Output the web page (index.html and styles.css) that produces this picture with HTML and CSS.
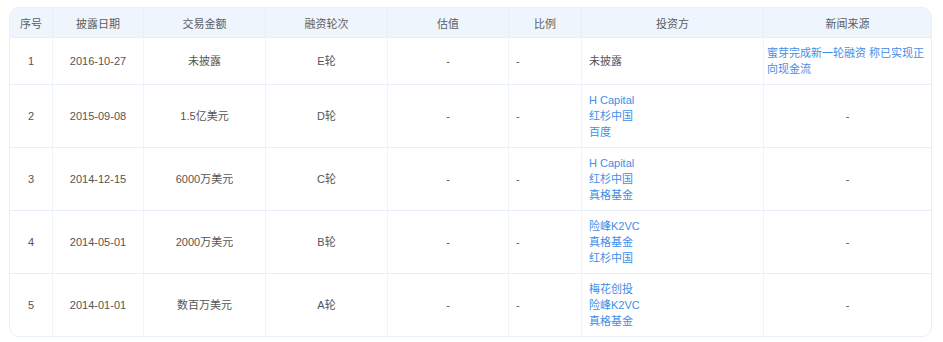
FILE: index.html
```html
<!DOCTYPE html>
<html lang="zh-CN">
<head>
<meta charset="utf-8">
<title>融资历程</title>
<link rel="stylesheet" href="styles.css">
</head>
<body>
<div class="wrap">
  <table class="fin">
    <colgroup>
      <col class="c1"><col class="c2"><col class="c3"><col class="c4"><col class="c5"><col class="c6"><col class="c7"><col class="c8">
    </colgroup>
    <thead>
      <tr>
        <th>序号</th><th>披露日期</th><th>交易金额</th><th>融资轮次</th><th>估值</th><th>比例</th><th>投资方</th><th>新闻来源</th>
      </tr>
    </thead>
    <tbody>
      <tr class="r1">
        <td>1</td><td>2016-10-27</td><td>未披露</td><td>E轮</td><td>-</td><td class="left">-</td>
        <td class="left">未披露</td>
        <td class="news"><a href="#">蜜芽完成新一轮融资 称已实现正向现金流</a></td>
      </tr>
      <tr>
        <td>2</td><td>2015-09-08</td><td>1.5亿美元</td><td>D轮</td><td>-</td><td class="left">-</td>
        <td class="left"><a href="#">H Capital</a><br><a href="#">红杉中国</a><br><a href="#">百度</a></td>
        <td>-</td>
      </tr>
      <tr>
        <td>3</td><td>2014-12-15</td><td>6000万美元</td><td>C轮</td><td>-</td><td class="left">-</td>
        <td class="left"><a href="#">H Capital</a><br><a href="#">红杉中国</a><br><a href="#">真格基金</a></td>
        <td>-</td>
      </tr>
      <tr>
        <td>4</td><td>2014-05-01</td><td>2000万美元</td><td>B轮</td><td>-</td><td class="left">-</td>
        <td class="left"><a href="#">险峰K2VC</a><br><a href="#">真格基金</a><br><a href="#">红杉中国</a></td>
        <td>-</td>
      </tr>
      <tr>
        <td>5</td><td>2014-01-01</td><td>数百万美元</td><td>A轮</td><td>-</td><td class="left">-</td>
        <td class="left"><a href="#">梅花创投</a><br><a href="#">险峰K2VC</a><br><a href="#">真格基金</a></td>
        <td>-</td>
      </tr>
    </tbody>
  </table>
</div>
</body>
</html>
```
FILE: styles.css
```css
html, body {
  margin: 0;
  padding: 0;
  background: #ffffff;
}
body {
  padding: 7px 0 0 9px;
  font-family: "Liberation Sans", "Noto Sans CJK SC", sans-serif;
  font-size: 11px;
  color: #555555;
}
.wrap {
  width: 923px;
  box-sizing: border-box;
  border: 1px solid #e8f0f9;
  border-radius: 10px;
  overflow: hidden;
}
.fin {
  width: 921px;
  table-layout: fixed;
  border-collapse: separate;
  border-spacing: 0;
}
.c1 { width: 42px; }
.c2 { width: 91px; }
.c3 { width: 122px; }
.c4 { width: 122px; }
.c5 { width: 121px; }
.c6 { width: 73px; }
.c7 { width: 182px; }
.c8 { width: 168px; }
.fin th {
  height: 29px;
  padding: 0;
  background: #eef5fd;
  font-weight: normal;
  color: #5e5e5e;
  text-align: center;
  vertical-align: middle;
  border-left: 1px solid #e6eef8;
}
.fin td {
  box-sizing: border-box;
  padding: 7px 7px;
  line-height: 16px;
  text-align: center;
  vertical-align: middle;
  border-top: 1px solid #e6eef8;
  border-left: 1px solid #eff4fa;
  color: #555555;
}
.fin th:first-child,
.fin td:first-child {
  border-left: none;
}
.fin td.left {
  text-align: left;
}
.fin td.news {
  text-align: left;
  padding: 7px 1px 7px 3px;
}
.fin a {
  color: #3f8ee8;
  text-decoration: none;
}
```
